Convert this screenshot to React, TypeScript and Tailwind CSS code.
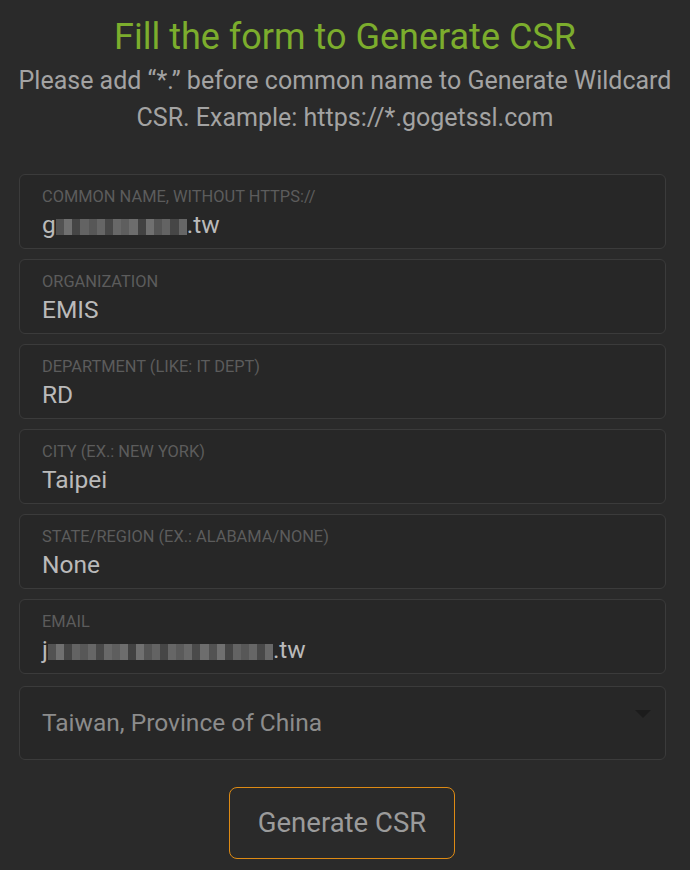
import React from "react";

const font = { fontFamily: "Roboto, 'Noto Sans', Arial, sans-serif" };

function Field({ label, children }: { label: string; children: React.ReactNode }) {
  return (
    <div className="rounded-[6px] border border-[#3b3b3b] bg-[#272727] pl-[22px] pr-4 pt-[12px] pb-[8px]">
      <div className="text-[16.4px] leading-5 uppercase text-[#5c5c5c]">{label}</div>
      <div className="mt-[3px] text-[24.5px] leading-[30px] text-[#bababa]">{children}</div>
    </div>
  );
}

const shades = ["#5a5a5a", "#6e6e6e", "#646464", "#7a7a7a", "#5e5e5e", "#727272", "#686868", "#7e7e7e", "#606060", "#747474"];

function Blur({ w }: { w: number }) {
  const n = Math.round(w / 8);
  return (
    <span className="inline-flex h-[16px] align-[-2px] overflow-hidden" style={{ width: w }}>
      {Array.from({ length: n }).map((_, i) => (
        <span
          key={i}
          className="h-full flex-1"
          style={{ backgroundColor: shades[(i * 7) % shades.length], opacity: i % 4 === 2 ? 0.55 : 0.85 }}
        />
      ))}
    </span>
  );
}

export default function App() {
  return (
    <div className="min-h-[870px] w-[690px] bg-[#2a2a2a] pt-[16px]" style={font}>
      <h1 className="text-center text-[36px] leading-[42px] text-[#7cad2d]">Fill the form to Generate CSR</h1>
      <p className="mx-auto mt-[4px] w-[680px] text-center text-[25px] leading-[37px] text-[#a3a3a3]">
        Please add “*.” before common name to Generate Wildcard CSR. Example: https://*.gogetssl.com
      </p>
      <div className="ml-[19px] mt-[38px] flex w-[647px] flex-col gap-[10px]">
        <Field label="Common name, without https://">
          g<Blur w={131} />.tw
        </Field>
        <Field label="Organization">EMIS</Field>
        <Field label="Department (like: IT Dept)">RD</Field>
        <Field label="City (ex.: New York)">Taipei</Field>
        <Field label="State/Region (ex.: Alabama/None)">None</Field>
        <Field label="Email">
          j<Blur w={225} />.tw
        </Field>
        <div className="relative mt-[2px] flex h-[74px] items-center rounded-[6px] border border-[#3b3b3b] bg-[#272727] pl-[22px]">
          <span className="text-[24.5px] leading-[30px] text-[#8c8c8c]">Taiwan, Province of China</span>
          <svg className="absolute right-[14px] top-[23px]" width="16" height="8" viewBox="0 0 16 8">
            <path d="M0 0 L16 0 L8 8 Z" fill="#1c1c1c" />
          </svg>
        </div>
      </div>
      <div className="mt-[27px] flex justify-center">
        <button className="mr-[6px] h-[72px] w-[226px] rounded-[8px] border border-[#dd8a14] bg-transparent text-[27.5px] text-[#9b9b9b]">
          Generate CSR
        </button>
      </div>
    </div>
  );
}
